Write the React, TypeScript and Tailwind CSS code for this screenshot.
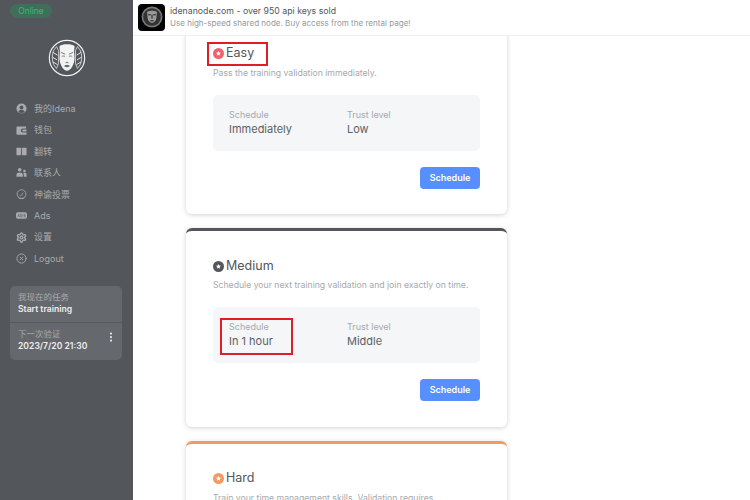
import { Settings, CircleX, EllipsisVertical } from "lucide-react";

const font = { fontFamily: "Inter, 'Noto Sans CJK SC', sans-serif" };

function IconUser() {
  return (
    <svg viewBox="0 0 12 12" className="w-[11px] h-[11px]">
      <circle cx="6" cy="6" r="5.5" fill="#a9abae" />
      <circle cx="6" cy="4.8" r="2.1" fill="#53565b" />
      <path d="M2.6 9.6c.6-1.6 2-2.2 3.4-2.2s2.8.6 3.4 2.2A4.6 4.6 0 0 1 6 11a4.6 4.6 0 0 1-3.4-1.4z" fill="#53565b" />
    </svg>
  );
}

function IconWallet() {
  return (
    <svg viewBox="0 0 12 12" className="w-[11px] h-[11px]">
      <path d="M0.5 2.5a1 1 0 0 1 1-1h9.5v2.2H7.5a2.3 2.3 0 0 0 0 4.6H11.5v2.2h-10a1 1 0 0 1-1-1z" fill="#a9abae" />
      <rect x="7" y="5" width="4.5" height="2" rx="0.5" fill="#a9abae" />
    </svg>
  );
}

function IconBook() {
  return (
    <svg viewBox="0 0 12 12" className="w-[11px] h-[11px]">
      <rect x="0.5" y="2" width="5" height="8" rx="0.5" fill="#a9abae" />
      <rect x="6.5" y="2" width="5" height="8" rx="0.5" fill="#a9abae" />
    </svg>
  );
}

function IconContacts() {
  return (
    <svg viewBox="0 0 12 12" className="w-[11px] h-[11px]">
      <circle cx="4" cy="3" r="2" fill="#a9abae" />
      <path d="M0.5 10.5V8.5C0.5 6.8 2 6 4 6s3.5.8 3.5 2.5v2z" fill="#a9abae" />
      <circle cx="9.2" cy="4.4" r="1.4" fill="#a9abae" />
      <path d="M8.5 10.5V8.2c0-.8-.3-1.3-.7-1.6.5-.3 1-.4 1.5-.4 1.4 0 2.2.7 2.2 2v2.3z" fill="#a9abae" />
    </svg>
  );
}

function IconOracle() {
  return (
    <svg viewBox="0 0 12 12" fill="none" stroke="#a9abae" strokeWidth="0.9" className="w-[11px] h-[11px]">
      <circle cx="6" cy="5.6" r="4.8" />
      <path d="M2.5 9.2c1 1.5 6 1.5 7 0M4 6.8c1 .9 3 .4 3.6-2.6" />
    </svg>
  );
}

function IconAds() {
  return (
    <svg viewBox="0 0 12 12" className="w-[11px] h-[11px]">
      <rect x="0" y="2.5" width="12" height="7" rx="2" fill="#a9abae" />
      <path d="M2 7.5l1-3 1 3M5.2 4.5v3h1l.8-1.5-.8-1.5zM10 4.7H8.6v1.3H10v1.5H8.4" fill="none" stroke="#53565b" strokeWidth="0.6" />
    </svg>
  );
}

function Logo() {
  return (
    <svg viewBox="0 0 40 40" className="w-[38px] h-[38px]">
      <circle cx="20" cy="20" r="18.6" fill="#53565b" stroke="#f2f2f2" strokeWidth="1.2" />
      <path d="M6 27c-2-5-2-11 0-15l3-4 2 4v14l-2 5zM34 27c2-5 2-11 0-15l-3-4-2 4v14l2 5z" fill="#53565b" stroke="#e8e8e8" strokeWidth="0.8" />
      <path d="M5 14l5 3M4.500 19l5 3M5 24l5 3M35 14l-5 3M35.500 19l-5 3M35 24l-5 3" stroke="#e8e8e8" strokeWidth="1" />
      <path d="M12 7.500c3-2.500 13-2.500 16 0l-.5 5 .5 8c-.5 7-4.500 13-8 13s-7.500-6-8-13l.5-8z" fill="#f2f2f2" />
      <path d="M13.500 14l4.500 2M26.500 14l-4.500 2M14.500 18.500c1-.8 2.500-.8 3.500 0M22 18.500c1-.8 2.500-.8 3.500 0" stroke="#53565b" strokeWidth="0.8" fill="none" />
      <path d="M18.500 25c1-.5 2-.5 3 0M17.500 28.500c1.500-1 3.500-1 5 0-1.500 1-3.500 1-5 0z" stroke="#53565b" strokeWidth="0.8" fill="#53565b" />
    </svg>
  );
}

function BannerLogo() {
  return (
    <div className="w-[27px] h-[27px] rounded-[4px] bg-black flex items-center justify-center shrink-0">
      <svg viewBox="0 0 40 40" className="w-[22px] h-[22px]">
        <circle cx="20" cy="20" r="19" fill="#777777" />
        <circle cx="20" cy="20" r="16" fill="#333333" />
        <path d="M11 11c3-3 15-3 18 0l-1 11c-.5 5-4.500 9-8 9s-7.500-4-8-9z" fill="#999999" />
        <path d="M13 16h5M22 16h5M20 16v7M17 27h6" stroke="#222" strokeWidth="1.800" />
      </svg>
    </div>
  );
}

function LevelIcon({ color }: { color: string }) {
  return (
    <svg viewBox="0 0 12 12" className="w-[11px] h-[11px] shrink-0">
      <circle cx="6" cy="6" r="6" fill={color} />
      <path d="M6 3.200l.8 1.800 1.900.2-1.400 1.300.4 1.900-1.700-1-1.700 1 .4-1.900-1.400-1.300 1.900-.2z" fill="#fff" />
    </svg>
  );
}

const navItems = [
  { label: "我的Idena", icon: <IconUser /> },
  { label: "钱包", icon: <IconWallet /> },
  { label: "翻转", icon: <IconBook /> },
  { label: "联系人", icon: <IconContacts /> },
  { label: "神谕投票", icon: <IconOracle /> },
  { label: "Ads", icon: <IconAds /> },
  { label: "设置", icon: <Settings className="w-[11px] h-[11px] text-[#a9abae]" strokeWidth={3} /> },
  { label: "Logout", icon: <CircleX className="w-[11px] h-[11px] text-[#a9abae]" strokeWidth={2} /> },
];

const levels = [
  {
    name: "Easy",
    desc: "Pass the training validation immediately.",
    schedule: "Immediately",
    trust: "Low",
    color: "#f0616d",
    border: "border-t-[#ef4e5b]",
    ring: "title",
  },
  {
    name: "Medium",
    desc: "Schedule your next training validation and join exactly on time.",
    schedule: "In 1 hour",
    trust: "Middle",
    color: "#53565b",
    border: "border-t-[#53565b]",
    ring: "schedule",
  },
  {
    name: "Hard",
    desc: "Train your time management skills. Validation requires",
    schedule: "In 1 day",
    trust: "High",
    color: "#f39a62",
    border: "border-t-[#f39a62]",
    ring: "",
  },
];

function Sidebar() {
  return (
    <aside className="w-[133px] h-full shrink-0 bg-[#53565b] flex flex-col px-[10px] pt-[4px]">
      <div className="w-[42px] h-[14px] rounded-full bg-[#3f6f5a] flex items-center justify-center text-[8.500px] leading-none text-[#2ebd72]">
        Online
      </div>
      <div className="flex justify-center mt-[21px]">
        <Logo />
      </div>
      <nav className="flex flex-col mt-[21px] pl-[6px]">
        {navItems.map((item) => (
          <div key={item.label} className="h-[21.43px] flex items-center gap-[7px] text-[9px] text-[#a9abae]">
            {item.icon}
            <span>{item.label}</span>
          </div>
        ))}
      </nav>
      <div className="mt-[17px] w-[112px] h-[74px] rounded-[5px] bg-[#65686d] flex flex-col">
        <div className="h-[37px] px-[8px] pt-[6px] border-b border-[#56595e]">
          <div className="text-[8.500px] leading-[11px] text-[#a9abae]">我现在的任务</div>
          <div className="text-[8.600px] leading-[13px] font-semibold text-[#eeeeee]">Start training</div>
        </div>
        <div className="relative px-[8px] pt-[6px]">
          <div className="text-[8.500px] leading-[11px] text-[#a9abae]">下一次验证</div>
          <div className="text-[8.600px] leading-[13px] font-semibold text-[#eeeeee]">2023/7/20 21:30</div>
          <EllipsisVertical className="absolute right-[5px] top-[8px] w-[12px] h-[12px] text-[#e4e4e4]" strokeWidth={2.500} />
        </div>
      </div>
    </aside>
  );
}

function Banner() {
  return (
    <header className="h-[36px] shrink-0 flex items-center gap-[5px] pl-[5px] pb-[1px] bg-white border-b border-[#eeeff1] relative z-10">
      <BannerLogo />
      <div>
        <div className="text-[8.750px] leading-[12px] text-[#53565b]">idenanode.com - over 950 api keys sold</div>
        <div className="text-[8.060px] leading-[12px] text-[#96999e]">Use high-speed shared node. Buy access from the rental page!</div>
      </div>
    </header>
  );
}

function LevelCard({ level }: { level: (typeof levels)[number] }) {
  return (
    <div className={`w-[321px] h-[198.500px] shrink-0 rounded-[6px] bg-white border-t-[3px] ${level.border} shadow-[0_1px_5px_rgba(0,0,0,0.18)] px-[27px] pt-[27px]`}>
      <div className="relative h-[16px] flex items-center gap-[2px] text-[12.500px] font-normal text-[#53565b]">
        <LevelIcon color={level.color} />
        <span>{level.name}</span>
        {level.ring === "title" && (
          <div className="absolute left-[-6px] top-[-4px] w-[61px] h-[24px] border-[2px] border-[#e01c26]" />
        )}
      </div>
      <p className="mt-[5px] text-[8.660px] leading-[12px] text-[#a6a9ad] whitespace-nowrap">{level.desc}</p>
      <div className="relative mt-[16px] h-[56px] rounded-[5px] bg-[#f5f6f7] flex pl-[16px] pt-[14px]">
        <div className="w-[118px]">
          <div className="text-[9px] leading-[12px] text-[#a6a9ad]">Schedule</div>
          <div className="text-[11px] leading-[16px] text-[#5c5f64]">{level.schedule}</div>
        </div>
        <div>
          <div className="text-[9px] leading-[12px] text-[#a6a9ad]">Trust level</div>
          <div className="text-[11px] leading-[16px] text-[#5c5f64]">{level.trust}</div>
        </div>
        {level.ring === "schedule" && (
          <div className="absolute left-[7px] top-[11px] w-[73px] h-[37px] border-[2px] border-[#e01c26]" />
        )}
      </div>
      <div className="flex justify-end mt-[16px]">
        <button className="w-[60px] h-[22px] rounded-[4px] bg-[#578fff] text-[9px] font-semibold text-white">Schedule</button>
      </div>
    </div>
  );
}

export default function App() {
  return (
    <div className="w-[750px] h-[500px] flex overflow-hidden bg-white" style={font}>
      <Sidebar />
      <main className="flex-1 h-full flex flex-col overflow-hidden">
        <Banner />
        <div className="flex flex-col gap-[14px] pl-[53px] -mt-[20.500px]">
          {levels.map((level) => (
            <LevelCard key={level.name} level={level} />
          ))}
        </div>
      </main>
    </div>
  );
}
